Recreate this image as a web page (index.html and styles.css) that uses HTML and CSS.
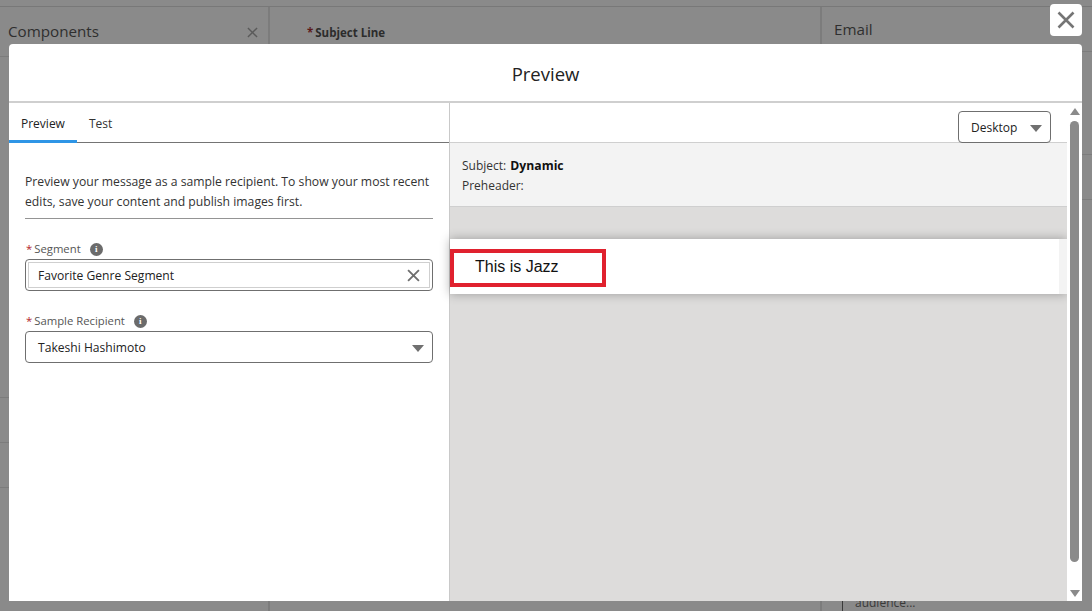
FILE: index.html
```html
<!DOCTYPE html>
<html lang="en">
<head>
<meta charset="utf-8">
<title>Preview</title>
<link rel="stylesheet" href="styles.css">
</head>
<body>
<div class="page">
  <div class="topbar"></div>
  <div class="panes">
    <section class="pane pane-left">
      <div class="pane-head left-head"><span class="pane-title">Components</span>
        <svg class="pane-x" viewBox="0 0 12 12"><path d="M1 1l10 10M11 1L1 11"/></svg></div>
      <div class="ghost-rows"><div class="ghost-row"></div><div class="ghost-row"></div><div class="ghost-row"></div></div>
    </section>
    <section class="pane pane-mid">
      <div class="subject-line"><span class="req-dark">*</span>Subject Line</div>
    </section>
    <section class="pane pane-right">
      <div class="pane-head right-head"><span class="pane-title">Email</span></div>
      <div class="right-gap"></div>
      <div class="right-rule"></div>
      <div class="right-rule second"></div>
      <div class="audience">audience...</div>
    </section>
  </div>
</div>

<button class="close-btn" aria-label="Close">
  <svg viewBox="0 0 20 20"><path d="M2.5 2.5l15 15M17.5 2.5l-15 15"/></svg>
</button>

<div class="modal">
  <header class="modal-head"><h1>Preview</h1></header>
  <div class="modal-body">
    <aside class="side">
      <nav class="tabs">
        <a class="tab active">Preview</a>
        <a class="tab">Test</a>
      </nav>
      <div class="side-content">
        <p class="intro">Preview your message as a sample recipient. To show your most recent edits, save your content and publish images first.</p>
        <div class="field seg-field">
          <label class="flabel"><span class="req">*</span>Segment <i class="info">i</i></label>
          <div class="input pill-input">
            <div class="pill">Favorite Genre Segment
              <svg class="pill-x" viewBox="0 0 12 12"><path d="M1 1l10 10M11 1L1 11"/></svg>
            </div>
          </div>
        </div>
        <div class="field">
          <label class="flabel"><span class="req">*</span>Sample Recipient <i class="info">i</i></label>
          <div class="input select-input">Takeshi Hashimoto<span class="caret"></span></div>
        </div>
      </div>
    </aside>
    <main class="stage">
      <div class="stage-scroll">
        <div class="toolbar">
          <div class="device">Desktop<span class="caret"></span></div>
        </div>
        <div class="meta">
          <div>Subject: <b>Dynamic</b></div>
          <div>Preheader:</div>
        </div>
        <div class="canvas">
          <div class="email-band">
            <div class="email-inner"><div class="jazz">This is Jazz</div></div>
          </div>
        </div>
      </div>
      <div class="scrollbar">
        <span class="arrow up"></span>
        <span class="thumb"></span>
        <span class="arrow down"></span>
      </div>
    </main>
  </div>
</div>
</body>
</html>
```
FILE: styles.css
```css
* { box-sizing: border-box; }
html, body { margin: 0; height: 100%; overflow: hidden; }
body {
  background: #8a8a8a;
  font-family: "Open Sans", "Noto Sans", sans-serif;
  color: #181818;
  font-size: 12px;
}
.page { height: 611px; display: flex; flex-direction: column; }
.topbar { height: 7px; border-bottom: 1px solid #787878; flex: none; }
.panes { flex: 1; display: grid; grid-template-columns: 270px 552px 270px; }
.pane { position: relative; }
.pane-left { border-right: 2px solid #7c7c7c; }
.pane-mid { border-right: 2px solid #7c7c7c; }
.pane-head { display: flex; justify-content: space-between; align-items: center; }
.left-head { height: 50px; border-bottom: 1px solid #7c7c7c; padding: 14px 10px 0 8px; align-items: flex-start; }
.right-head { height: 45px; border-bottom: 1px solid #7c7c7c; padding: 12px 0 0 12px; align-items: flex-start; }
.pane-title { font-size: 15.2px; line-height: 20px; color: #2f2f2f; }
.pane-x { width: 11px; height: 11px; margin-top: 6px; }
.pane-x path { stroke: #5a5a5a; stroke-width: 1.5; fill: none; }
.ghost-rows { margin-top: 340px; }
.ghost-row { height: 45px; border-top: 1px solid #7c7c7c; }
.subject-line { padding: 18px 0 0 37px; font-weight: 700; font-size: 11.5px; color: #2c2c2c; line-height: 16px; }
.req-dark { color: #5c1a1a; margin-right: 2px; }
.right-gap { height: 102px; }
.right-rule { border-top: 1px solid #7c7c7c; height: 45px; }
.audience { position: absolute; left: 32px; top: 588px; font-size: 12px; line-height: 16px; color: #3a3a3a; border-left: 1px solid #3a3a3a; padding-left: 12px; height: 20px; margin-left: -12px; }

.close-btn {
  position: absolute; left: 1050px; top: 4px; width: 32px; height: 32px;
  background: #fff; border: 0; border-radius: 4px; padding: 6px;
  display: flex; align-items: center; justify-content: center;
}
.close-btn svg { width: 20px; height: 20px; }
.close-btn path { stroke: #757575; stroke-width: 2.6; fill: none; }

.modal {
  position: absolute; left: 9px; top: 44px; width: 1073px; height: 557px;
  background: #fff; border-radius: 4px 4px 0 0; display: flex; flex-direction: column; overflow: hidden;
}
.modal-head { height: 59px; flex: none; border-bottom: 2px solid #cfcfcf; display: flex; align-items: center; justify-content: center; }
.modal-head h1 { margin: 2px 0 0; font-weight: 400; font-size: 18.5px; line-height: 24px; color: #222; }
.modal-body { flex: 1; display: flex; min-height: 0; }
.side { width: 441px; flex: none; border-right: 1px solid #c9c9c9; }
.tabs { height: 40px; border-bottom: 1px solid #747474; display: flex; }
.tab { height: 40px; padding: 12px 12px 0; line-height: 18px; font-size: 12px; color: #333; }
.tab.active { border-bottom: 3px solid #2e95e6; padding-right: 12px; color: #222; }
.side-content { padding: 29px 16px 0; }
.intro { margin: 0; line-height: 20px; font-size: 12.2px; color: #333; padding-bottom: 6px; border-bottom: 1px solid #949494; }
.field { margin-top: 21px; }
.flabel { display: flex; align-items: center; font-size: 11.3px; line-height: 18px; color: #555; padding-left: 1px; }
.req { color: #b3262c; margin-right: 2px; }
.info { width: 13px; height: 13px; margin-left: 9px; border-radius: 50%; background: #6b6b6b; color: #fff; font: 700 9px/13px "Liberation Serif", serif; text-align: center; }
.input { margin-top: 1px; height: 32px; border: 1px solid #6f6f6f; border-radius: 4px; font-size: 12.1px; color: #222; position: relative; }
.pill-input { padding: 2px; }
.pill { height: 26px; border: 1px solid #cfcfcf; display: flex; align-items: center; justify-content: space-between; padding: 0 9px; }
.pill-x { width: 13px; height: 13px; }
.pill-x path { stroke: #6f6f6f; stroke-width: 1.7; fill: none; }
.select-input { display: flex; align-items: center; justify-content: space-between; padding: 0 8px 0 12px; }
.caret { width: 0; height: 0; border-left: 6px solid transparent; border-right: 6px solid transparent; border-top: 7px solid #707070; margin-top: 3px; }

.stage { flex: 1; min-width: 0; display: flex; }
.stage-scroll { flex: 1; min-width: 0; display: flex; flex-direction: column; }
.toolbar { height: 40px; display: flex; justify-content: flex-end; align-items: flex-start; padding: 8px 16px 0 0; border-bottom: 1px solid #cfcfcf; }
.device { width: 93px; height: 32px; border: 1px solid #6f6f6f; border-radius: 4px; display: flex; align-items: center; justify-content: space-between; padding: 0 8px 0 12px; color: #222; }
.meta { height: 64px; background: #f3f3f3; border-bottom: 1px solid #cfcfcf; padding: 13px 12px 0; line-height: 20px; color: #333; }
.meta b { color: #111; margin-left: 1px; font-size: 12.2px; }
.canvas { flex: 1; background: #dddcdb; padding-top: 32px; }
.email-band { height: 55px; background: #f3f3f3; box-shadow: 0 0 10px rgba(0,0,0,.3); padding-right: 8px; }
.email-inner { height: 55px; background: #fff; padding-top: 10px; }
.jazz { width: 156px; height: 38px; border: 4px solid #e0212e; padding: 4px 0 0 21px; font: 16px/20px "Liberation Sans", Arial, sans-serif; color: #111; }
.scrollbar { width: 15px; flex: none; background: #fff; display: flex; flex-direction: column; align-items: center; padding: 5px 0 4px; }
.thumb { flex: 1; width: 9px; background: #8a8a8a; border-radius: 5px; margin: 6px 0 28px; }
.arrow { width: 0; height: 0; border-left: 5px solid transparent; border-right: 5px solid transparent; }
.arrow.up { border-bottom: 7px solid #8a8a8a; }
.arrow.down { border-top: 7px solid #8a8a8a; }
```
